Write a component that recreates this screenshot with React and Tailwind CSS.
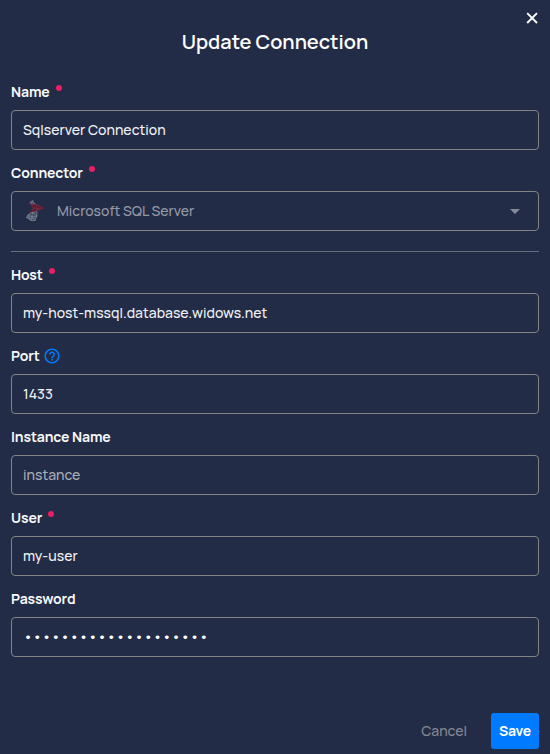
function Label({ text, required, help }) {
  return (
    <div className="flex h-[22px] items-center pb-[2px] text-[14px] font-bold text-[#f8f9fb]">
      <span className="tracking-[-0.120px] whitespace-nowrap">{text}</span>
      {required && <span className="mb-[7px] ml-[6px] size-[6px] rounded-full bg-[#e91e63]" />}
      {help && (
        <svg className="-mb-[1px] ml-[3.500px] size-[18px]" viewBox="0 0 24 24" fill="#007bff">
          <path d="M11 18h2v-2h-2v2zm1-16C6.480 2 2 6.480 2 12s4.480 10 10 10 10-4.480 10-10S17.520 2 12 2zm0 18c-4.410 0-8-3.590-8-8s3.590-8 8-8 8 3.590 8 8-3.590 8-8 8zm0-14c-2.210 0-4 1.790-4 4h2c0-1.100.9-2 2-2s2 .9 2 2c0 2-3 1.750-3 5h2c0-2.250 3-2.500 3-5 0-2.210-1.790-4-4-4z" />
        </svg>
      )}
    </div>
  );
}

function Field({ children, ...label }) {
  return (
    <div className="flex flex-col gap-[7px]">
      <Label {...label} />
      <div className="flex h-[40px] items-center rounded-[4px] border border-[#838383] px-[11px] pb-[2px] text-[14px] font-medium whitespace-nowrap text-[#f0f1f4]">
        {children}
      </div>
    </div>
  );
}

function SqlServerLogo() {
  return (
    <svg className="mt-[2px] mr-[11px] ml-[3px] h-[22px] w-[20px] opacity-60" viewBox="0 0 20 22" fill="none" strokeLinecap="round" strokeLinejoin="round">
      <path d="M5 1.500L7 .8L7.500 2.500L9 4M5 1.500L4 3L6.500 4L9 4M7 .8L5.500 2.500L7.500 3" stroke="#aab6c2" strokeWidth=".8" />
      <path d="M5 4.500L10.500 4.500L17.500 8.200L11 10.500L3.500 13L7.500 9Z" fill="#8a1522" fillOpacity=".45" stroke="#c4202c" strokeWidth=".8" />
      <path d="M5.500 5L11 10.500L10.500 4.500L7.500 9L17 8M7.500 9L5.500 12.500M11 10.500L13 5.800" stroke="#c4202c" strokeWidth=".8" />
      <path d="M2.500 14.500L6.500 12.500L11 11.800L10.800 16L9 20.500L5 20.500L.8 17.500Z" fill="#aab6c2" fillOpacity=".25" stroke="#b5c0ca" strokeWidth=".8" />
      <path d="M2.500 14.500L6 16.500L10.800 16M6.500 12.500L6 16.500L5 20.500M.8 17.500L6 16.500L9 20.500M6.500 12.500L10.800 16M2.500 14.500L3 19L7.500 18.500L10.800 16" stroke="#b5c0ca" strokeWidth=".8" />
    </svg>
  );
}

export default function App() {
  return (
    <div className="flex h-[754px] w-[550px] flex-col bg-[#232c47] px-[11px] font-['Manrope','Inter',sans-serif]">
      <div className="flex h-[28px] items-end justify-end">
        <svg className="mb-[2px] size-[16px]" viewBox="0 0 16 16" stroke="#fff" strokeWidth="1.900">
          <path d="M4.200 3.200L14 13M14 3.200L4.200 13" />
        </svg>
      </div>
      <h1 className="h-[28px] text-center text-[20px] leading-[28px] font-semibold text-white">Update Connection</h1>
      <form className="mt-[25px] flex flex-col gap-[12px]">
        <Field text="Name" required>Sqlserver Connection</Field>
        <Field text="Connector" required>
          <SqlServerLogo />
          <span className="grow text-[#9499a6]">Microsoft SQL Server</span>
          <svg className="mt-[2px] mr-[7px] h-[5px] w-[10px]" viewBox="0 0 10 5" fill="#858b9b">
            <path d="M0 0H10L5 5Z" />
          </svg>
        </Field>
        <hr className="mt-[8px] border-t border-[#666d7e]" />
        <Field text="Host" required>my-host-mssql.database.widows.net</Field>
        <Field text="Port" help>1433</Field>
        <Field text="Instance Name">
          <span className="text-[#a8acb6]">instance</span>
        </Field>
        <Field text="User" required>my-user</Field>
        <Field text="Password">
          <span className="mt-[1px] text-[15px] leading-none tracking-[-0.800px] text-white">••••••••••••••••••••</span>
        </Field>
      </form>
      <div className="mt-auto mb-[5px] flex items-center justify-end text-[14px]">
        <button type="button" className="mr-[24px] h-[36px] pb-[2px] font-medium text-[#85888f]">Cancel</button>
        <button type="button" className="h-[36px] w-[48px] rounded-[3px] bg-[#007bff] pb-[2px] font-bold tracking-[-0.2px] text-white">Save</button>
      </div>
    </div>
  );
}
